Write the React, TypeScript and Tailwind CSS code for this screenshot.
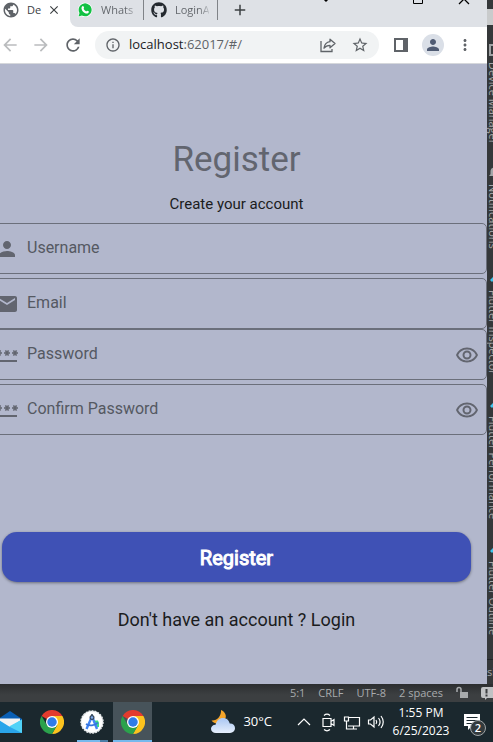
import type { ReactNode } from "react";
import {
  MdEmail,
  MdOutlineRemoveRedEye,
  MdPassword,
  MdPerson,
  MdPublic,
  MdInfoOutline,
  MdArrowBack,
  MdArrowForward,
  MdRefresh,
  MdStarBorder,
  MdMoreVert,
  MdClose,
  MdAdd,
  MdNotifications,
} from "react-icons/md";
import { FaGithub } from "react-icons/fa";

const uiFont = "font-['Open_Sans','Noto_Sans',sans-serif]";

function WhatsappIcon() {
  return (
    <svg width="16" height="16" viewBox="0 0 16 16" aria-hidden="true">
      <path d="M.7 15.3 1.8 11.400A7.200 7.200 0 1 1 4.600 14.200z" fill="#fff" />
      <path d="M1.500 14.500 2.500 11.100A6.500 6.500 0 1 1 4.900 13.500z" fill="#12c143" />
      <path
        d="M5.400 4.200c.6-.4 1-.2 1.200.3l.5 1.200c.1.400-.2.700-.6 1.100.7 1.300 1.400 2 2.700 2.600.5-.6.700-.9 1.100-.7l1.300.6c.4.200.4.500.2 1-.5 1.200-1.700 1.500-3 1.100C6.600 10.700 5 9 4.600 7c-.3-1.200 0-2.200.8-2.800z"
        fill="#fff"
      />
    </svg>
  );
}

function ShareIcon() {
  return (
    <svg width="18" height="18" viewBox="0 0 18 18" fill="none" stroke="#5f6368" strokeWidth="1.300" aria-hidden="true">
      <path d="M2 5v10.500h11v-2.500" />
      <path d="M11 3.200 16 7.500l-5 4.300V9.300C8.200 9.300 6.500 10.200 5 12.200 5.500 8.500 7.400 6.200 11 5.700z" strokeLinejoin="round" />
    </svg>
  );
}

function PanelIcon() {
  return (
    <svg width="14" height="14" viewBox="0 0 14 14" aria-hidden="true">
      <path d="M0 0h14v14H0z" fill="#5f6368" />
      <path d="M2 2h7v10H2z" fill="#fff" />
    </svg>
  );
}

function ChromeIcon() {
  return (
    <svg width="24" height="24" viewBox="0 0 48 48" aria-hidden="true">
      <path d="M24 24 3.200 12A24 24 0 0 1 44.800 12z" fill="#e33b2e" />
      <path d="M24 12h20.800A24 24 0 0 1 24 48l10.400-18z" fill="#fcc31e" />
      <path d="M13.600 30 3.200 12A24 24 0 0 0 24 48l10.400-18z" fill="#2ba24c" />
      <circle cx="24" cy="24" r="12" fill="#fff" />
      <circle cx="24" cy="24" r="9.500" fill="#2f7bea" />
    </svg>
  );
}

function MailIcon() {
  return (
    <svg width="24" height="24" viewBox="0 0 24 24" aria-hidden="true">
      <path d="M0 9 12 1l12 8v3H0z" fill="#0a5fb4" />
      <path d="M2 8.500h20v7L12 20 2 15z" fill="#f3f3f3" />
      <path d="M0 9.500 12 17l12-7.500V23H0z" fill="#2aa5ea" />
      <path d="M24 9.500V23L11 16.500z" fill="#50d2f7" />
    </svg>
  );
}

function AndroidStudioIcon() {
  return (
    <svg width="24" height="24" viewBox="0 0 24 24" aria-hidden="true">
      <circle cx="12" cy="12" r="11" fill="#fff" stroke="#e5e8ea" strokeWidth="1.500" strokeDasharray="2 1" />
      <path d="M13 10.500h5l1 2.500v4l-3 .5z" fill="#3ddc84" />
      <path d="m11.500 7.500-5 11.500M12.500 7.500l4.500 11.500" stroke="#4285f4" strokeWidth="2.400" />
      <path d="M6 14c3 2 9 2 12-1.500" fill="none" stroke="#3574dd" strokeWidth="1.700" />
      <circle cx="12" cy="7.500" r="1.900" fill="#7da9ee" stroke="#35475a" strokeWidth="1.200" />
      <path d="M12 4v2" stroke="#35475a" strokeWidth="1.600" />
    </svg>
  );
}

function WeatherIcon() {
  return (
    <svg width="26" height="26" viewBox="0 0 26 26" aria-hidden="true">
      <defs>
        <linearGradient id="cloud" x1="0" y1="0" x2="0" y2="1">
          <stop offset="0" stopColor="#a9c6f3" />
          <stop offset="1" stopColor="#e6effc" />
        </linearGradient>
      </defs>
      <path d="M11 1c4.500 2 6 6 4 9.500 1-.1 1.800-.5 2.500-1-.8 3-3.500 5.500-7.500 5.500-4 0-7-1.500-8.500-3.500C7 12 11.500 7 11 1z" fill="#f5a52a" />
      <path
        d="M6 24c-3 0-5-1.800-5-4.200 0-2.500 2-4.200 4.600-4.100C6.500 11.500 9.500 9 13 9c3.400 0 6 2.200 6.700 5.400 3.200-.2 5.300 1.900 5.300 4.700 0 2.900-2 4.900-5 4.900z"
        fill="url(#cloud)"
      />
    </svg>
  );
}

function TrayIcon({ children }: { children: ReactNode }) {
  return (
    <svg width="24" height="20" viewBox="0 0 24 20" fill="none" stroke="#fff" strokeWidth="1.200" aria-hidden="true">
      {children}
    </svg>
  );
}

function TabStrip() {
  return (
    <div className="flex h-[27px] bg-[#dee1e6] text-[11px] text-[#5f6368]">
      <div className="flex w-[70px] shrink-0 bg-white pb-[7px] text-[#3c4043]">
        <button className="flex items-center">
          <MdPublic size={18} className="ml-0.5 shrink-0 text-[#5f6368]" />
          <span className="ml-[7px] w-[18px] text-left">De</span>
        </button>
        <button aria-label="Close tab" className="flex items-center">
          <MdClose size={14} className="ml-0.5" />
        </button>
      </div>
      <div className="flex flex-1 bg-white">
        <div className="flex flex-1 items-center rounded-bl-lg bg-[#dee1e6] pb-[7px]">
          <button className="ml-[7px] flex items-center">
            <WhatsappIcon />
            <span className="ml-2 w-[34px] bg-linear-to-r from-[#5f6368] from-70% to-[#b4b7bc] bg-clip-text text-left text-transparent">
              Whats
            </span>
          </button>
          <span className="ml-2 h-5 w-px bg-[#808388]" />
          <button className="ml-[7px] flex items-center">
            <FaGithub size={16} className="text-[#24292f]" />
            <span className="ml-2 w-[34px] bg-linear-to-r from-[#5f6368] from-70% to-[#c4c7cc] bg-clip-text text-left text-transparent">
              LoginA
            </span>
          </button>
          <span className="ml-2 h-5 w-px bg-[#808388]" />
          <button aria-label="New tab" className="ml-[13px] text-[#3c4043]">
            <MdAdd size={18} />
          </button>
        </div>
      </div>
      <div className="flex gap-[34px] pr-[17px] text-black">
        <button aria-label="Search tabs" className="-mt-1 mr-[47px] h-3">
          <svg width="10" height="12" viewBox="0 0 10 12" fill="none" stroke="currentColor" strokeWidth="1.500">
            <path d="m2 2 3 3 3-3" />
          </svg>
        </button>
        <button aria-label="Maximize" className="h-5 self-start">
          <svg width="12" height="20" viewBox="0 0 12 20" fill="none" stroke="currentColor">
            <path d="M1.500-5.500h9v9h-9z" />
          </svg>
        </button>
        <button aria-label="Close" className="h-5 self-start">
          <svg width="12" height="20" viewBox="0 0 12 20" fill="none" stroke="currentColor" strokeWidth="1.300">
            <path d="m1-6 10 10M11-6 1 4" />
          </svg>
        </button>
      </div>
    </div>
  );
}

function Toolbar() {
  return (
    <div className="flex h-[37px] items-center border-b border-[#d5d7db] bg-white text-[#5f6368]">
      <button aria-label="Back" className="text-[#babcbe]">
        <MdArrowBack size={20} />
      </button>
      <button aria-label="Forward" className="ml-[11px] text-[#babcbe]">
        <MdArrowForward size={20} />
      </button>
      <button aria-label="Reload" className="ml-3">
        <MdRefresh size={20} />
      </button>
      <div className="ml-3 flex h-7 flex-1 items-center rounded-full bg-[#f1f3f4] pr-2.5 pl-2.5">
        <MdInfoOutline size={16} className="shrink-0" />
        <div className="ml-2 flex-1 text-[13px] text-[#5f6368]">
          <span className="text-[#202124]">localhost</span>:62017/#/
        </div>
        <button aria-label="Share">
          <ShareIcon />
        </button>
        <button aria-label="Bookmark" className="ml-3.5">
          <MdStarBorder size={18} />
        </button>
      </div>
      <button aria-label="Side panel" className="ml-[15px]">
        <PanelIcon />
      </button>
      <button aria-label="Profile" className="ml-3.5 flex size-[22px] items-center justify-center rounded-full bg-[#dadfe7] text-[#4f5b73]">
        <MdPerson size={18} />
      </button>
      <button aria-label="Menu" className="mr-[13px] ml-3">
        <MdMoreVert size={18} />
      </button>
    </div>
  );
}

function Field({ label, icon, type = "text", reveal }: { label: string; icon: ReactNode; type?: string; reveal?: boolean }) {
  return (
    <div className="flex h-[51px] items-center rounded-[5px] border border-[#6b6f7b] pr-[7px] pl-2 text-[#62656f]">
      {icon}
      <input
        type={type}
        placeholder={label}
        aria-label={label}
        className="ml-2 h-full min-w-0 flex-1 bg-transparent pb-0.5 text-base outline-none placeholder:text-[#555962]"
      />
      {reveal && (
        <button type="button" aria-label={`Show ${label}`}>
          <MdOutlineRemoveRedEye size={24} />
        </button>
      )}
    </div>
  );
}

function RegisterPage() {
  return (
    <main className="flex-1 overflow-hidden bg-[#b2b7cc] font-[Roboto,sans-serif]">
      <form className="-ml-3.5 flex flex-col pt-[75px]">
        <h1 className="text-center text-[35px] leading-[42px] text-[#62656f]">Register</h1>
        <p className="mt-3.5 mb-[9px] text-center text-[15px] leading-[19px] text-[#1b1c20]">Create your account</p>
        <div className="flex flex-col gap-1">
          <Field label="Username" icon={<MdPerson size={24} />} />
          <div>
            <Field label="Email" icon={<MdEmail size={24} />} />
            <Field label="Password" type="password" icon={<MdPassword size={24} />} reveal />
          </div>
          <Field label="Confirm Password" type="password" icon={<MdPassword size={24} />} reveal />
        </div>
        <button
          type="submit"
          className="mx-4 mt-[97px] h-[50px] rounded-[15px] bg-[#3f51b5] pt-px text-xl text-white shadow-[0_1px_3px_rgba(0,0,0,0.4)] [-webkit-text-stroke:1px_white]"
        >
          Register
        </button>
        <p className="mt-[26px] text-center text-lg leading-6 text-[#1b1c20]">
          Don't have an account ? <a href="#login">Login</a>
        </p>
      </form>
    </main>
  );
}

function FlutterMark() {
  return (
    <svg width="12" height="12" viewBox="0 0 12 12" className="shrink-0" aria-hidden="true">
      <path d="M1 7 7 1h4L3 9zM5 9l3-3h4l-3 3 3 3H8z" fill="#40c4ee" />
    </svg>
  );
}

function ToolStrip() {
  return (
    <aside className="w-1.5 overflow-hidden bg-[#35383a] text-[11px] leading-3 text-[#a3a6a8]">
      <div className="flex w-5 flex-col items-start">
        <span className="mt-[9px] h-4 w-5 bg-[#c9cbcc]" />
        <svg width="12" height="12" viewBox="0 0 12 12" fill="none" stroke="#a0a3a5" strokeWidth="2" className="mt-[19px] ml-0.5" aria-hidden="true">
          <path d="M8 1H1v10h7" />
        </svg>
        <button className="mt-1.5 h-[80px] [writing-mode:vertical-rl] text-left whitespace-nowrap">Device Manager</button>
        <MdNotifications size={14} className="mt-[23px]" />
        <button className="mt-[5px] h-[62px] [writing-mode:vertical-rl] text-left whitespace-nowrap">Notifications</button>
        <span className="mt-[27px] ml-0.5"><FlutterMark /></span>
        <button className="mt-[5px] h-[82px] [writing-mode:vertical-rl] text-left whitespace-nowrap">Flutter Inspector</button>
        <span className="mt-[27px] ml-0.5"><FlutterMark /></span>
        <button className="mt-[5px] h-[99px] [writing-mode:vertical-rl] text-left whitespace-nowrap">Flutter Performance</button>
        <span className="mt-[29px] ml-0.5"><FlutterMark /></span>
        <button className="mt-[5px] h-[73px] [writing-mode:vertical-rl] text-left whitespace-nowrap">Flutter Outline</button>
        <span className="mt-[25px] h-px w-5 bg-[#222426]" />
        <span className="mt-1.5">si</span>
      </div>
    </aside>
  );
}

function StatusBar() {
  return (
    <div className="flex h-[18px] items-center justify-end gap-[13px] overflow-hidden bg-linear-to-b from-[#2c2e30] to-[#3c3f41] to-60% text-[11px] leading-4 text-[#a8abad]">
      <span>5:1</span>
      <span>CRLF</span>
      <span>UTF-8</span>
      <span>2 spaces</span>
      <svg width="12" height="14" viewBox="0 0 12 14" aria-hidden="true">
        <path d="M1 6V3.500a2 2 0 0 1 4 0V6" fill="none" stroke="#a8abad" strokeWidth="1.500" />
        <path d="M4 6h8v6H4z" fill="#a8abad" />
      </svg>
      <svg width="12" height="14" viewBox="0 0 12 14" aria-hidden="true">
        <path d="M2 1h10v11H6l-2 2v-2H2a2 2 0 0 1-2-2V3a2 2 0 0 1 2-2z" fill="#c0c2c4" />
        <path d="M5.500 3v4.500M5.500 8.500v2" stroke="#3c3f41" strokeWidth="2" />
      </svg>
    </div>
  );
}

function Taskbar() {
  return (
    <footer className="flex h-10 items-center overflow-hidden bg-[#1b282e] text-xs text-white">
      <div className="-ml-2.5 flex h-full">
        <button aria-label="Mail" className="flex w-10 items-center justify-center">
          <MailIcon />
        </button>
        <button aria-label="Chrome" className="ml-0.5 flex w-10 items-center justify-center">
          <ChromeIcon />
        </button>
        <button aria-label="Android Studio" className="flex w-10 flex-col items-center">
          <span className="flex flex-1 items-center pt-0.5">
            <AndroidStudioIcon />
          </span>
          <span className="flex h-0.5 w-[31px] bg-[#76b9ed]">
            <span className="ml-auto w-2 bg-[#4a7da6]" />
          </span>
        </button>
        <button aria-label="Chrome window" className="ml-px flex w-[39px] items-center justify-center border-b-2 border-[#76b9ed] bg-[#47535a] pt-0.5">
          <ChromeIcon />
        </button>
      </div>
      <div className="flex flex-1 items-center justify-end">
        <button className="flex items-center gap-[7px] text-[13px]">
          <WeatherIcon />
          30°C
        </button>
        <div className="ml-5 flex">
          <TrayIcon>
            <path d="m6 13 6-6 6 6" />
          </TrayIcon>
          <TrayIcon>
            <path d="M7 6.500h8v8H7zM15 9.500l3-2v6l-3-2M8 3.500c2-1.700 4-1.700 6 0M8 17.500c2 1.700 4 1.700 6 0" />
          </TrayIcon>
          <TrayIcon>
            <path d="M8 5.500h11.500v8.500H8M4.500 5h4v4h-4zM6.500 9v8H17M13.500 14v3" />
          </TrayIcon>
          <TrayIcon>
            <path d="M4.500 8v4h2l3.500 3V5L6.500 8zM12 8c1 1.300 1 2.700 0 4M14.500 6c2 2.500 2 5.500 0 8M17 4c3 4 3 8 0 12" />
          </TrayIcon>
        </div>
        <div className="ml-1.5 flex w-[54px] flex-col items-center leading-[18px] whitespace-nowrap">
          <span>1:55 PM</span>
          <span>6/25/2023</span>
        </div>
        <button aria-label="Notifications" className="relative mr-[13px] ml-4 h-6 w-4">
          <svg width="16" height="18" viewBox="0 0 16 18" aria-hidden="true">
            <path d="M0 1h16v12H8l-4 4v-4H0z" fill="#fff" />
            <path d="M2.500 4.500h11M2.500 7.500h11M2.500 10.500h7" stroke="#1b282e" />
          </svg>
          <span className="absolute top-2.5 left-1.5 flex size-4 items-center justify-center rounded-full border border-[#a0a5a7] bg-[#333a3d] text-[11px] font-semibold">
            2
          </span>
        </button>
      </div>
    </footer>
  );
}

export default function App() {
  return (
    <div className={`flex min-h-screen flex-col overflow-hidden ${uiFont}`}>
      <div className="flex flex-1">
        <div className="flex min-w-0 flex-1 flex-col">
          <TabStrip />
          <Toolbar />
          <RegisterPage />
        </div>
        <ToolStrip />
      </div>
      <StatusBar />
      <Taskbar />
    </div>
  );
}
